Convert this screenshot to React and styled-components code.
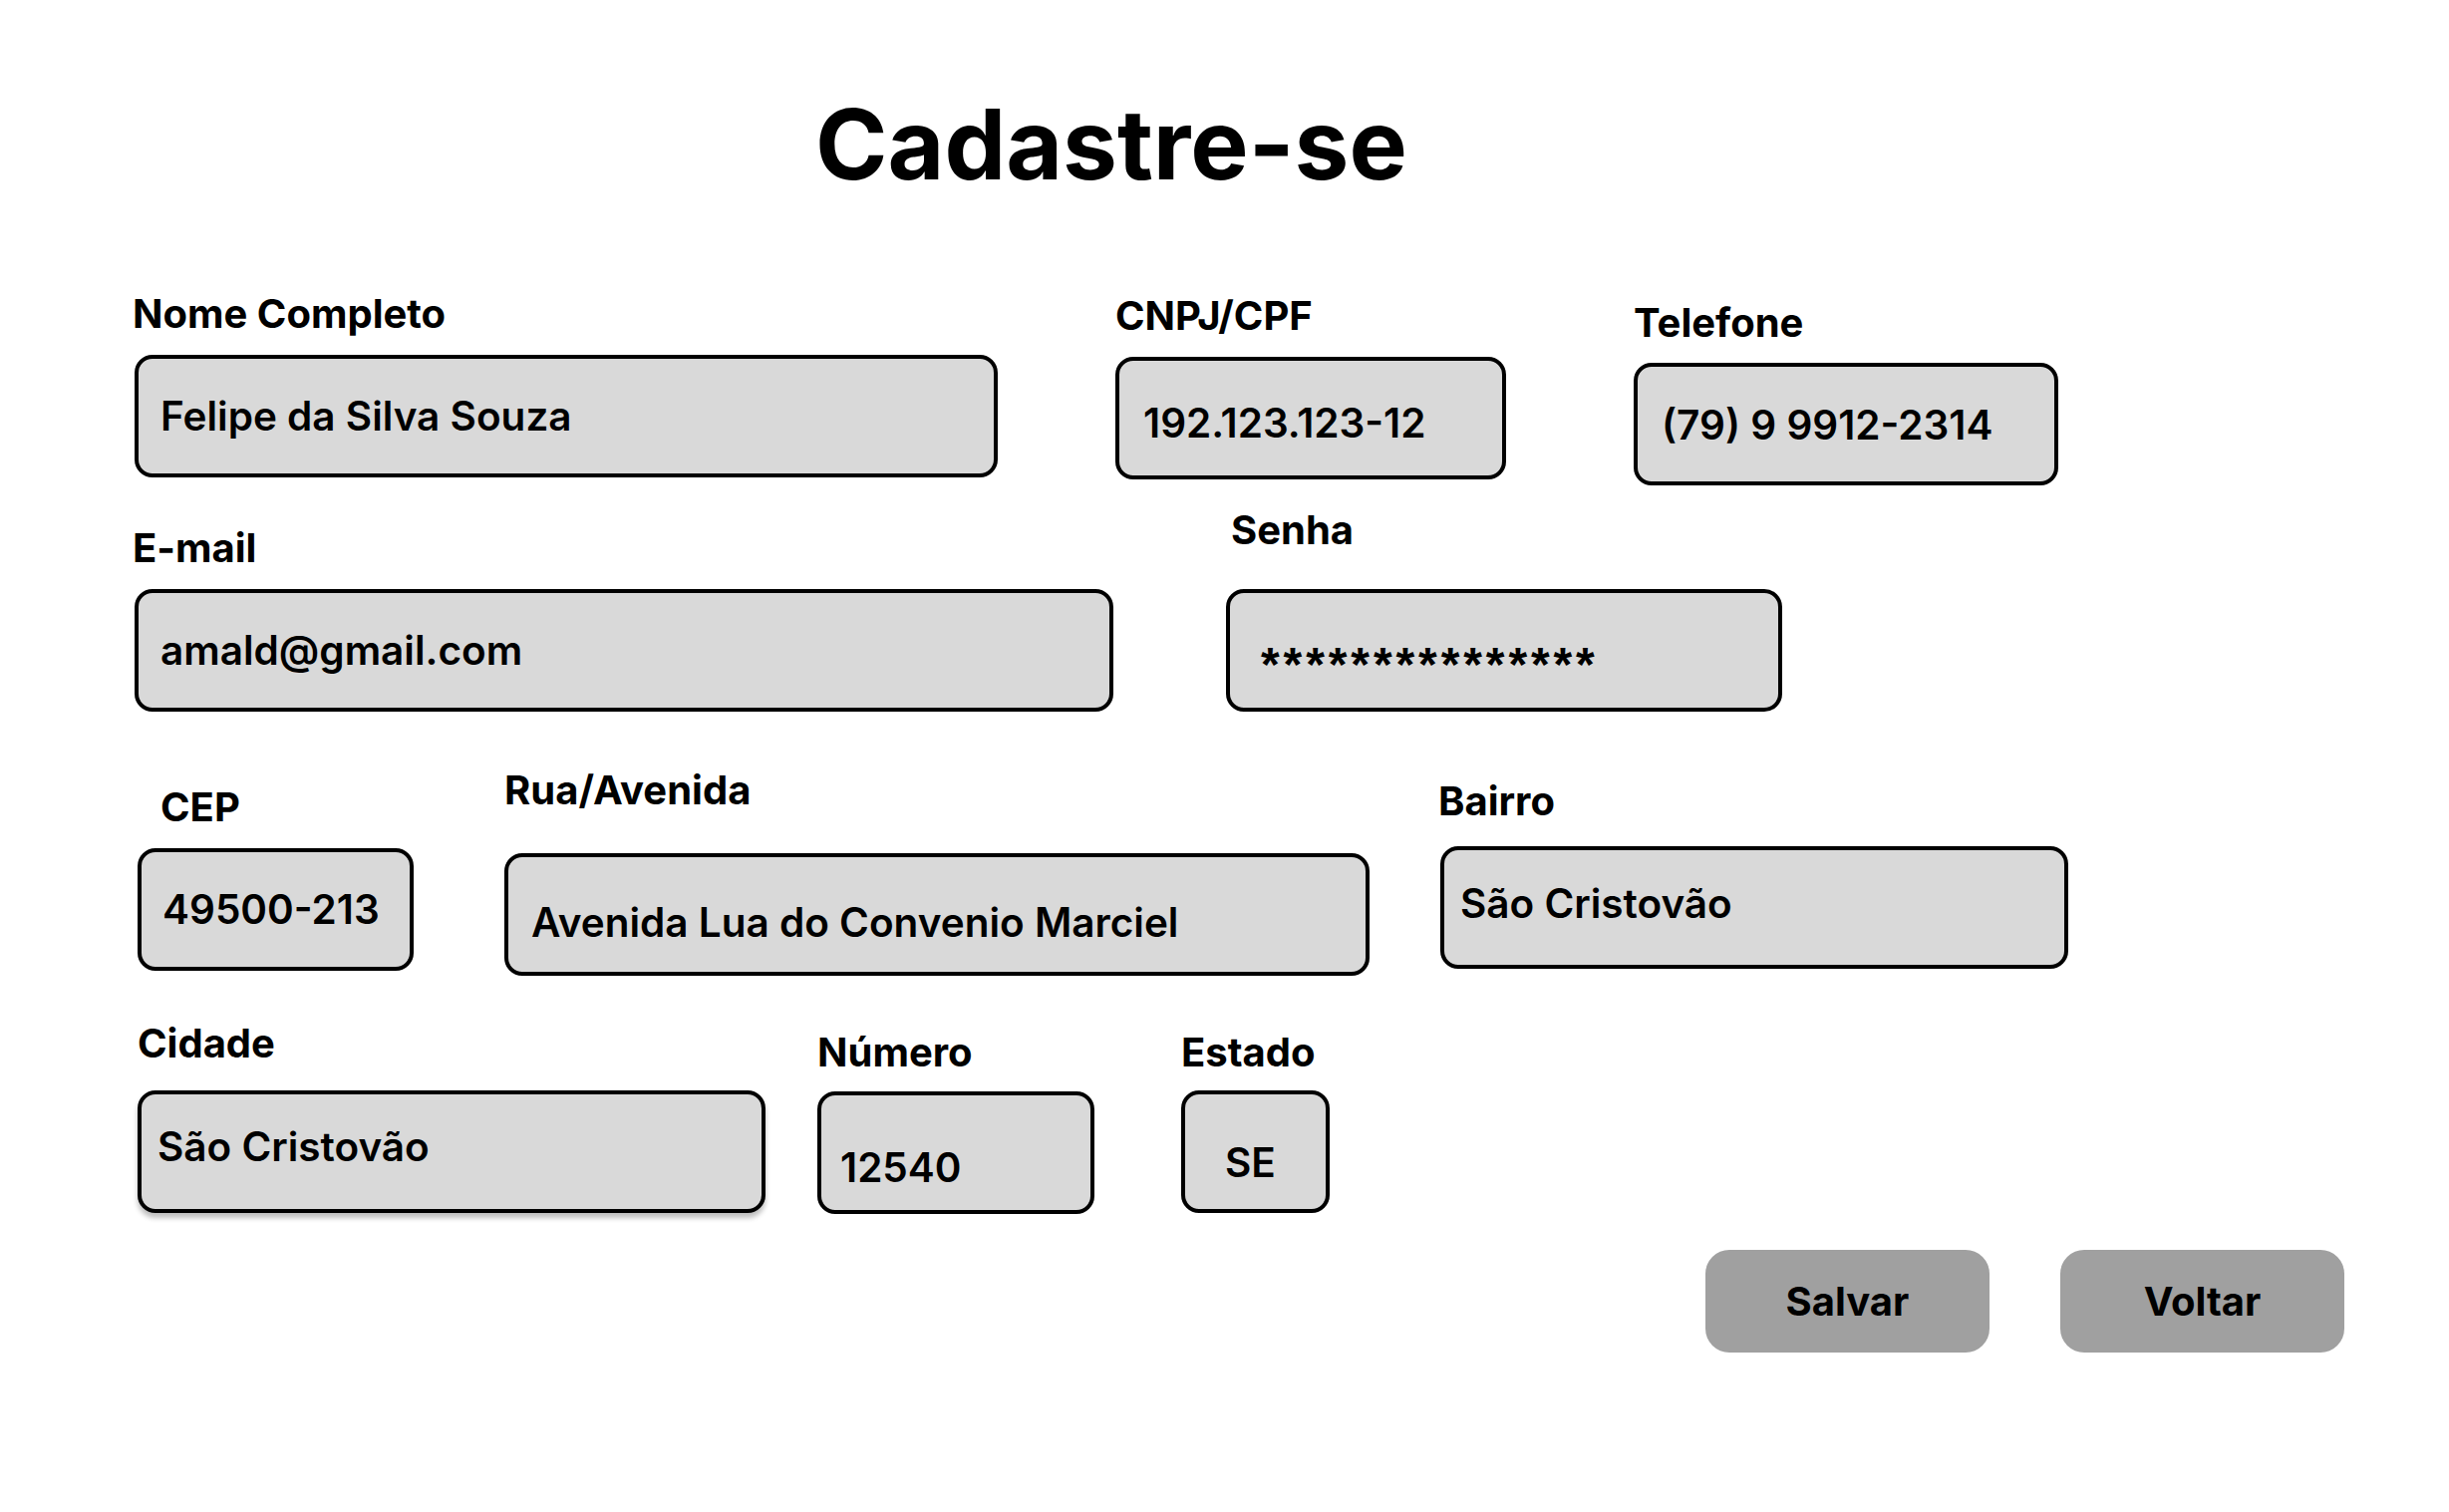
import React from "react"
import styled, { createGlobalStyle } from "styled-components"

const GlobalStyle = createGlobalStyle`
  html, body {
    margin: 0;
    padding: 0;
    background: #ffffff;
  }
  body {
    font-family: Inter, "Noto Sans", "Liberation Sans", sans-serif;
    color: #000;
  }
`

const rows = [
  {
    top: 0,
    fields: [
      { label: "Nome Completo", value: "Felipe da Silva Souza", w: 866, ml: 0, mt: 0, lx: -2, gap: 17, px: 26, dy: 0 },
      { label: "CNPJ/CPF", value: "192.123.123-12", w: 392, ml: 118, mt: 2, lx: 0, gap: 17, px: 28, dy: 5 },
      { label: "Telefone", value: "(79) 9 9912-2314", w: 426, ml: 128, mt: 9, lx: 0, gap: 16, px: 28, dy: 1 },
    ],
  },
  {
    top: 21,
    fields: [
      { label: "E-mail", value: "amald@gmail.com", w: 982, ml: 0, mt: 18, lx: -2, gap: 17, px: 26, dy: 0 },
      { label: "Senha", value: "***************", w: 558, ml: 113, mt: 0, lx: 5, gap: 35, px: 35, dy: 14, secret: true },
    ],
  },
  {
    top: 55,
    fields: [
      { label: "CEP", value: "49500-213", w: 277, ml: 3, mt: 17, lx: 23, gap: 17, px: 25, dy: 0 },
      { label: "Rua/Avenida", value: "Avenida Lua do Convenio Marciel", w: 868, ml: 91, mt: 0, lx: 0, gap: 39, px: 27, dy: 8 },
      { label: "Bairro", value: "São Cristovão", w: 630, ml: 71, mt: 11, lx: -2, gap: 21, px: 20, dy: -4 },
    ],
  },
  {
    top: 44,
    fields: [
      { label: "Cidade", value: "São Cristovão", w: 630, ml: 3, mt: 0, lx: 0, gap: 23, px: 20, dy: -5, shadow: true },
      { label: "Número", value: "12540", w: 278, ml: 52, mt: 9, lx: 0, gap: 15, px: 23, dy: 15 },
      { label: "Estado", value: "SE", w: 149, ml: 87, mt: 9, lx: 0, gap: 14, px: 44, dy: 11 },
    ],
  },
]

const App = () => (
  <>
    <GlobalStyle />
    <Page>
      <Title>Cadastre-se</Title>
      <Form>
        {rows.map((row, i) => (
          <Row key={i} $top={row.top}>
            {row.fields.map((f) => (
              <Field key={f.label} $w={f.w} $ml={f.ml} $mt={f.mt}>
                <Label $lx={f.lx} $gap={f.gap}>
                  {f.label}
                </Label>
                <InputBox $px={f.px} $dy={f.dy} $shadow={f.shadow}>
                  {f.secret ? <Stars>{f.value}</Stars> : f.value}
                </InputBox>
              </Field>
            ))}
          </Row>
        ))}
        <Actions>
          <ActionButton type="button">Salvar</ActionButton>
          <ActionButton type="button">Voltar</ActionButton>
        </Actions>
      </Form>
    </Page>
  </>
)

export default App

const Page = styled.div`
  width: 2457px;
  min-height: 1517px;
  box-sizing: border-box;
  padding-top: 85px;
`

const Title = styled.h1`
  margin: 0 0 0 818px;
  font-size: 98px;
  line-height: 120px;
  font-weight: 700;
  letter-spacing: 0;
`

const Form = styled.div`
  display: flex;
  flex-direction: column;
  padding-left: 135px;
  margin-top: 86px;
`

const Row = styled.div`
  display: flex;
  align-items: flex-start;
  margin-top: ${(p) => p.$top}px;
`

const Field = styled.div`
  display: flex;
  flex-direction: column;
  width: ${(p) => p.$w}px;
  margin-left: ${(p) => p.$ml}px;
  margin-top: ${(p) => p.$mt}px;
  flex-shrink: 0;
`

const Label = styled.label`
  font-size: 40px;
  line-height: 48px;
  font-weight: 700;
  margin-left: ${(p) => p.$lx}px;
  margin-bottom: ${(p) => p.$gap}px;
  white-space: nowrap;
`

const InputBox = styled.div`
  display: flex;
  align-items: center;
  box-sizing: border-box;
  height: 123px;
  border: 4px solid #000;
  border-radius: 18px;
  background: #d9d9d9;
  padding-left: ${(p) => p.$px - 4}px;
  padding-top: ${(p) => Math.max(0, p.$dy * 2)}px;
  padding-bottom: ${(p) => Math.max(0, -p.$dy * 2)}px;
  font-size: 40.5px;
  font-weight: 600;
  white-space: nowrap;
  box-shadow: ${(p) => (p.$shadow ? "0 5px 5px rgba(0, 0, 0, 0.25)" : "none")};
`

const Stars = styled.span`
  display: block;
  font-family: "Liberation Sans", Arial, sans-serif;
  font-weight: 700;
  font-size: 48px;
  line-height: 48px;
  letter-spacing: 3.9px;
`

const Actions = styled.div`
  display: flex;
  justify-content: flex-end;
  gap: 71px;
  margin-top: 36px;
  padding-right: 105px;
`

const ActionButton = styled.button`
  width: 285px;
  height: 103px;
  border: none;
  border-radius: 24px;
  background: #a0a0a0;
  font-family: Inter, "Liberation Sans", sans-serif;
  font-size: 40px;
  font-weight: 700;
  color: #000;
  cursor: pointer;
`
